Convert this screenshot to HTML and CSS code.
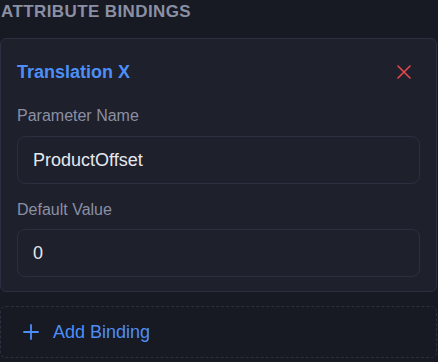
FILE: index.html
```html
<!DOCTYPE html>
<html lang="en">
<head>
  <meta charset="UTF-8">
  <title>Attribute Bindings</title>
  <link rel="stylesheet" href="styles.css">
</head>
<body>
  <!-- Bindings panel -->
  <div class="panel">
    <h2 class="section-title">Attribute Bindings</h2>

    <div class="binding-card">
      <div class="binding-head">
        <h3>Translation X</h3>
        <button class="remove-btn" aria-label="Remove">
          <svg width="14" height="14" viewBox="0 0 14 14">
            <path d="M1 1 L13 13 M13 1 L1 13" stroke="#e5484d" stroke-width="1.6" stroke-linecap="round"/>
          </svg>
        </button>
      </div>

      <label class="field">
        <span>Parameter Name</span>
        <input type="text" value="ProductOffset">
      </label>

      <label class="field">
        <span>Default Value</span>
        <input type="text" value="0">
      </label>
    </div>

    <button class="add-btn">
      <svg width="16" height="16" viewBox="0 0 16 16">
        <path d="M8 1 V15 M1 8 H15" stroke="#4d8ef7" stroke-width="1.8" stroke-linecap="round"/>
      </svg>
      Add Binding
    </button>
  </div>
</body>
</html>
```

FILE: styles.css
```css
/* Theme */
:root {
  --bg: #171a23;
  --card: #1e202c;
  --border: #2c2f40;
  --muted: #8b8fa3;
  --text: #e6e8ef;
  --accent: #4d8ef7;
}

body {
  margin: 0;
  background-color: var(--bg);
  font-family: "Liberation Sans", Arial, sans-serif;
  color: var(--text);
}

.panel {
  padding: 0 1px 0 0;
}

.section-title {
  margin: 0 0 16px 0;
  padding: 2px 0 0 1px;
  font-size: 17px;
  line-height: 20px;
  font-weight: 700;
  letter-spacing: 0.4px;
  text-transform: uppercase;
  color: var(--muted);
}

/* Binding Card */
.binding-card {
  background-color: var(--card);
  border: 1px solid var(--border);
  border-radius: 6px;
  padding: 22px 16px 14px 16px;
  margin-bottom: 14px;
}

.binding-head {
  display: flex;
  justify-content: space-between;
  align-items: center;
  margin-bottom: 24px;
}

.binding-head h3 {
  margin: 0;
  font-size: 18px;
  line-height: 22px;
  font-weight: 700;
  color: var(--accent);
}

.remove-btn {
  background: none;
  border: none;
  padding: 0;
  margin-right: 9px;
  display: flex;
  cursor: pointer;
}

.field {
  display: block;
  margin-bottom: 17px;
}

.field:last-child {
  margin-bottom: 0;
}

.field span {
  display: block;
  font-size: 16px;
  line-height: 18px;
  color: var(--muted);
  margin-bottom: 11px;
}

.field:last-child span {
  margin-bottom: 10px;
}

.field input {
  display: block;
  width: 100%;
  box-sizing: border-box;
  height: 48px;
  padding: 0 15px;
  background-color: var(--card);
  border: 1px solid var(--border);
  border-radius: 8px;
  font-family: inherit;
  font-size: 18px;
  color: var(--text);
}

/* Add binding */
.add-btn {
  display: flex;
  align-items: center;
  gap: 14px;
  width: 100%;
  height: 52px;
  padding: 0 0 0 22px;
  background: none;
  border: 1px dashed var(--border);
  border-radius: 6px;
  font-family: inherit;
  font-size: 18px;
  color: var(--accent);
  cursor: pointer;
}
```
